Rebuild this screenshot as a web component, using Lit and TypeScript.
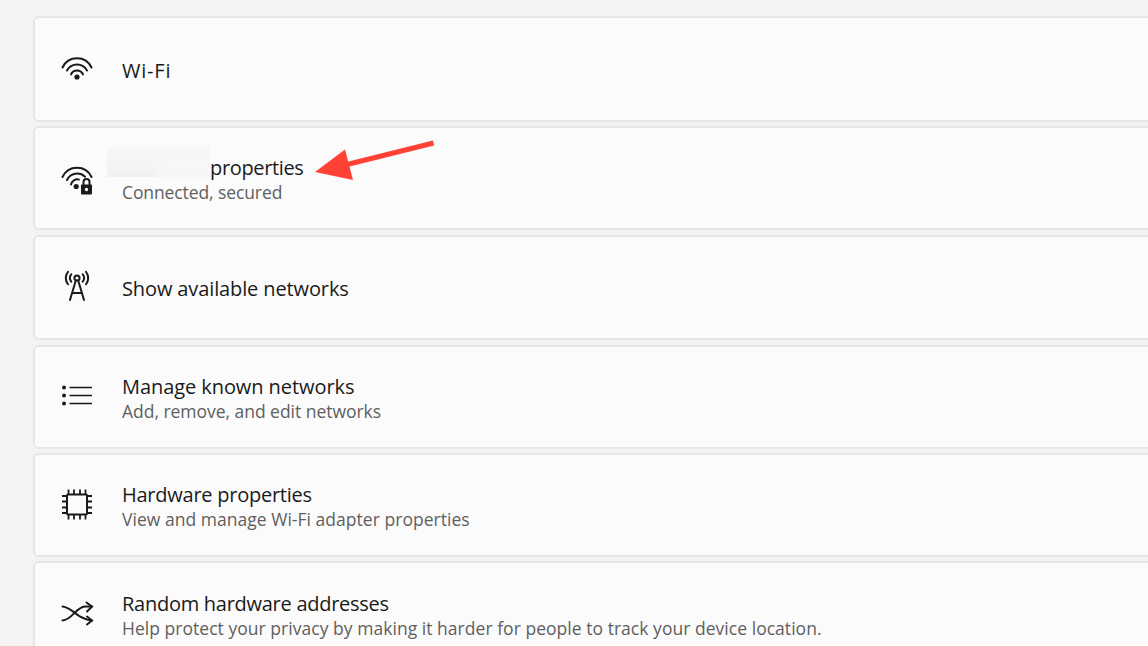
import { LitElement, html, css, svg } from "lit";
import { customElement } from "lit/decorators.js";

const S = (inner: unknown) => html`<svg class="ic" viewBox="0 0 32 32" fill="none" stroke="#1a1a1a" stroke-width="2" stroke-linecap="round">${inner}</svg>`;

const wifi = S(svg`
  <path d="M1.500 12.500A16 16 0 0 1 30.500 12.500"/>
  <path d="M6 15.500A11.300 11.300 0 0 1 26 15.500"/>
  <path d="M10 19.400A6.500 6.500 0 0 1 22 19.400"/>
  <circle cx="16" cy="22" r="2.600" fill="#1a1a1a" stroke="none"/>`);

const wifiLock = S(svg`<g transform="translate(0 1)">
  <path d="M1.500 12A16 16 0 0 1 30.500 12"/>
  <path d="M6 15A11.300 11.300 0 0 1 24 11.800"/>
  <path d="M10 19.400A6.500 6.500 0 0 1 18 14.600"/>
  <circle cx="15.200" cy="21.500" r="2.600" fill="#1a1a1a" stroke="none"/>
  <path d="M22.500 20v-3a3 3 0 0 1 6 0V20" stroke-width="2"/>
  <path fill-rule="evenodd" stroke="none" fill="#1a1a1a" d="M20 20.500a1 1 0 0 1 1-1h9a1 1 0 0 1 1 1v8a1 1 0 0 1-1 1h-9a1 1 0 0 1-1-1zM25.500 22.800a1.700 1.700 0 1 0 .01 0z"/>
</g>`);

const tower = S(svg`
  <circle cx="16" cy="5" r="2.600"/>
  <path d="M14.800 7.500L9 27M17.200 7.500L23 27M11 20H21" stroke-width="2"/>
  <path d="M10.300 1.300A5.900 5.900 0 0 0 10.300 8.700M21.700 1.300A5.900 5.900 0 0 1 21.700 8.700" stroke-width="2"/>
  <path d="M7 -1.300A11 11 0 0 0 7 11.300M25 -1.300A11 11 0 0 1 25 11.300" stroke-width="2"/>`);

const list = S(svg`
  <circle cx="3" cy="4.500" r="2" fill="#1a1a1a" stroke="none"/>
  <circle cx="3" cy="12.500" r="2" fill="#1a1a1a" stroke="none"/>
  <circle cx="3" cy="20.500" r="2" fill="#1a1a1a" stroke="none"/>
  <path d="M8.500 4.500H31M8.500 12.500H31M8.500 20.500H31" stroke-linecap="butt" stroke-width="1.600"/>`);

const chip = S(svg`<g transform="translate(0 -2.500)">
  <rect x="6" y="6" width="20" height="20" rx="1"/>
  <path d="M7.500 1V6M13 1V6M19 1V6M24.500 1V6M7.500 26V31M13 26V31M19 26V31M24.500 26V31M1 7.500H6M1 13H6M1 19H6M1 24.500H6M26 7.500H31M26 13H31M26 19H31M26 24.500H31" stroke-width="1.800" stroke-linecap="butt"/>
</g>`);

const shuffle = S(svg`
  <path d="M1.500 6.500C9 7.500 13 13 19 16.500C23 18.500 27 20.500 31 20.500"/>
  <path d="M1.500 20.500C11 20 15 7 24 6.500H31"/>
  <path d="M25.500 2.500L31 6.500L26 11.500M26 16.500L31 20.500L26 24.500"/>`);

@customElement("app-root")
export class AppRoot extends LitElement {
  static styles = css`
    :host { display: block; width: 1148px; height: 646px; overflow: hidden; position: relative; background: #f3f3f3; font-family: "Open Sans", "Noto Sans", sans-serif; }
    .list { display: flex; flex-direction: column; padding: 16px 0 0 33px; width: 1300px; box-sizing: border-box; }
    .card { box-sizing: border-box; display: flex; align-items: center; flex: none; background: #fbfbfb; border: 2px solid #e6e6e6; border-radius: 6px; padding: 3px 0 0 26px; }
    .ic { width: 32px; height: 32px; flex: none; margin-right: 29px; overflow: visible; }
    .texts { display: flex; flex-direction: column; }
    .t { font-size: 20px; line-height: 26px; color: #1a1a1a; white-space: nowrap; }
    .s { font-size: 17.500px; line-height: 23px; color: #5f5f5f; white-space: nowrap; }
    .redact { display: inline-block; width: 103px; height: 30px; margin: -22px 0 -2px -15px; background:
      linear-gradient(#f6f6f6, #f6f6f6) 0 0 / 100% 11px no-repeat,
      linear-gradient(90deg, #f4f4f4 0 42px, #f7f7f7 54px) 0 11px / 100% 12px no-repeat,
      linear-gradient(90deg, #f1f1f1 0 42px, #f6f6f6 54px) 0 23px / 100% 7px no-repeat; }
    .arrow { position: absolute; left: 310px; top: 135px; width: 130px; height: 50px; }
  `;

  private card(h: number, gap: number, icon: unknown, title: unknown, ls: number, sub?: string, subLs = 0) {
    return html`<div class="card" style="height:${h}px;margin-bottom:${gap}px">
      ${icon}
      <div class="texts"><div class="t" style="letter-spacing:${ls}px">${title}</div>${sub ? html`<div class="s" style="letter-spacing:${subLs}px">${sub}</div>` : null}</div>
    </div>`;
  }

  render() {
    return html`
      <div class="list">
        ${this.card(106, 4, wifi, "Wi-Fi", 0.8)}
        ${this.card(104, 5, wifiLock, html`<span class="redact"></span>properties`, -0.35, "Connected, secured", -0.1)}
        ${this.card(105, 5, tower, "Show available networks", -0.12)}
        ${this.card(104, 4, list, "Manage known networks", -0.07, "Add, remove, and edit networks", -0.03)}
        ${this.card(104, 4, chip, "Hardware properties", -0.25, "View and manage Wi-Fi adapter properties", 0.03)}
        ${this.card(106, 0, shuffle, "Random hardware addresses", -0.27, "Help protect your privacy by making it harder for people to track your device location.", 0.035)}
      </div>
      <svg class="arrow" viewBox="310 135 130 50">
        <path d="M433.500 143L345 165" stroke="#ff4235" stroke-width="5" fill="none"/>
        <path d="M315 172L345 149.500L353 180Z" fill="#ff4235"/>
      </svg>`;
  }
}
